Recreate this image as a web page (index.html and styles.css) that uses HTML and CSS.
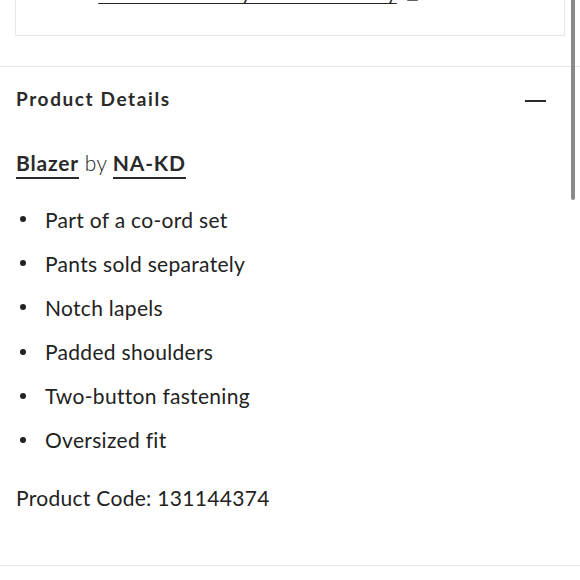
FILE: index.html
```html
<!DOCTYPE html>
<html>
<head>
<meta charset="utf-8">
<link rel="stylesheet" href="styles.css">
</head>
<body>
<div class="page">
  <div class="policy">
    <a class="policy-link" href="#">View our Delivery &amp; Returns Policy</a>
    <svg class="ext" width="11" height="11" viewBox="0 0 11 11"><path d="M1 1h9v9H1z" fill="none" stroke="#2d2d2d" stroke-width="1.5"/></svg>
  </div>
  <section class="details">
    <div class="details-head">
      <h2 class="details-title">Product Details</h2>
      <span class="minus"></span>
    </div>
    <p class="byline"><a class="u" href="#">Blazer</a> by <a class="u" href="#">NA-KD</a></p>
    <ul class="features">
      <li><span class="dot"></span>Part of a co-ord set</li>
      <li><span class="dot"></span>Pants sold separately</li>
      <li><span class="dot"></span>Notch lapels</li>
      <li><span class="dot"></span>Padded shoulders</li>
      <li><span class="dot"></span>Two-button fastening</li>
      <li><span class="dot"></span>Oversized fit</li>
    </ul>
    <p class="code">Product Code: 131144374</p>
  </section>
  <div class="scrollbar"></div>
</div>
</body>
</html>
```
FILE: styles.css
```css
html, body {
  margin: 0;
  padding: 0;
  background: #fff;
}
body {
  font-family: Lato, "Open Sans", sans-serif;
  color: #222;
  overflow: hidden;
}
.page {
  position: relative;
  width: 580px;
  height: 580px;
  overflow: hidden;
}
.policy {
  margin: -34px 15px 0 15px;
  height: 70px;
  border: 1px solid #e8e8e8;
  box-sizing: border-box;
  display: flex;
  justify-content: center;
  align-items: flex-start;
  gap: 10px;
  padding-top: 14px;
  padding-right: 64px;
}
.policy-link {
  font-size: 19.5px;
  line-height: 24px;
  color: #222;
  text-decoration: underline;
  text-underline-offset: 3px;
}
.ext { margin-top: 9px; }
.details {
  margin-top: 30px;
  border-top: 1px solid #e8e8e8;
  border-bottom: 1px solid #e8e8e8;
  padding: 0 0 0 16px;
  height: 500px;
  box-sizing: border-box;
}
.details-head {
  display: flex;
  align-items: center;
  justify-content: space-between;
  padding: 20px 34px 0 0;
  height: 24px;
}
.details-title {
  margin: 0;
  font-size: 19px;
  line-height: 24px;
  font-weight: 700;
  letter-spacing: 1.6px;
  color: #2a2a2a;
}
.minus {
  width: 21px;
  height: 2px;
  background: #2a2a2a;
  margin-top: 4px;
}
.byline {
  margin: 39px 0 0 0;
  font-size: 21px;
  line-height: 26px;
  font-weight: 300;
  letter-spacing: 0.3px;
}
.u {
  color: #2a2a2a;
  font-weight: 700;
  letter-spacing: 0.8px;
  text-decoration: none;
  border-bottom: 2px solid #2a2a2a;
  padding-bottom: 2px;
}
.features {
  list-style: none;
  margin: 29px 0 0 0;
  padding: 0;
}
.features li {
  display: flex;
  align-items: center;
  height: 28px;
  margin-bottom: 16.2px;
  font-size: 21px;
  font-weight: 400;
  letter-spacing: 0.3px;
}
.dot {
  width: 6px;
  height: 6px;
  border-radius: 50%;
  background: #222;
  margin: 0 19px 0 4px;
}
.code {
  margin: 0;
  padding-top: 14px;
  font-size: 21px;
  line-height: 28px;
  font-weight: 400;
  letter-spacing: 0.3px;
}
.scrollbar {
  position: absolute;
  top: 0;
  right: 5px;
  width: 4px;
  height: 200px;
  background: #8a8a8a;
  border-radius: 0 0 2px 2px;
}
```
